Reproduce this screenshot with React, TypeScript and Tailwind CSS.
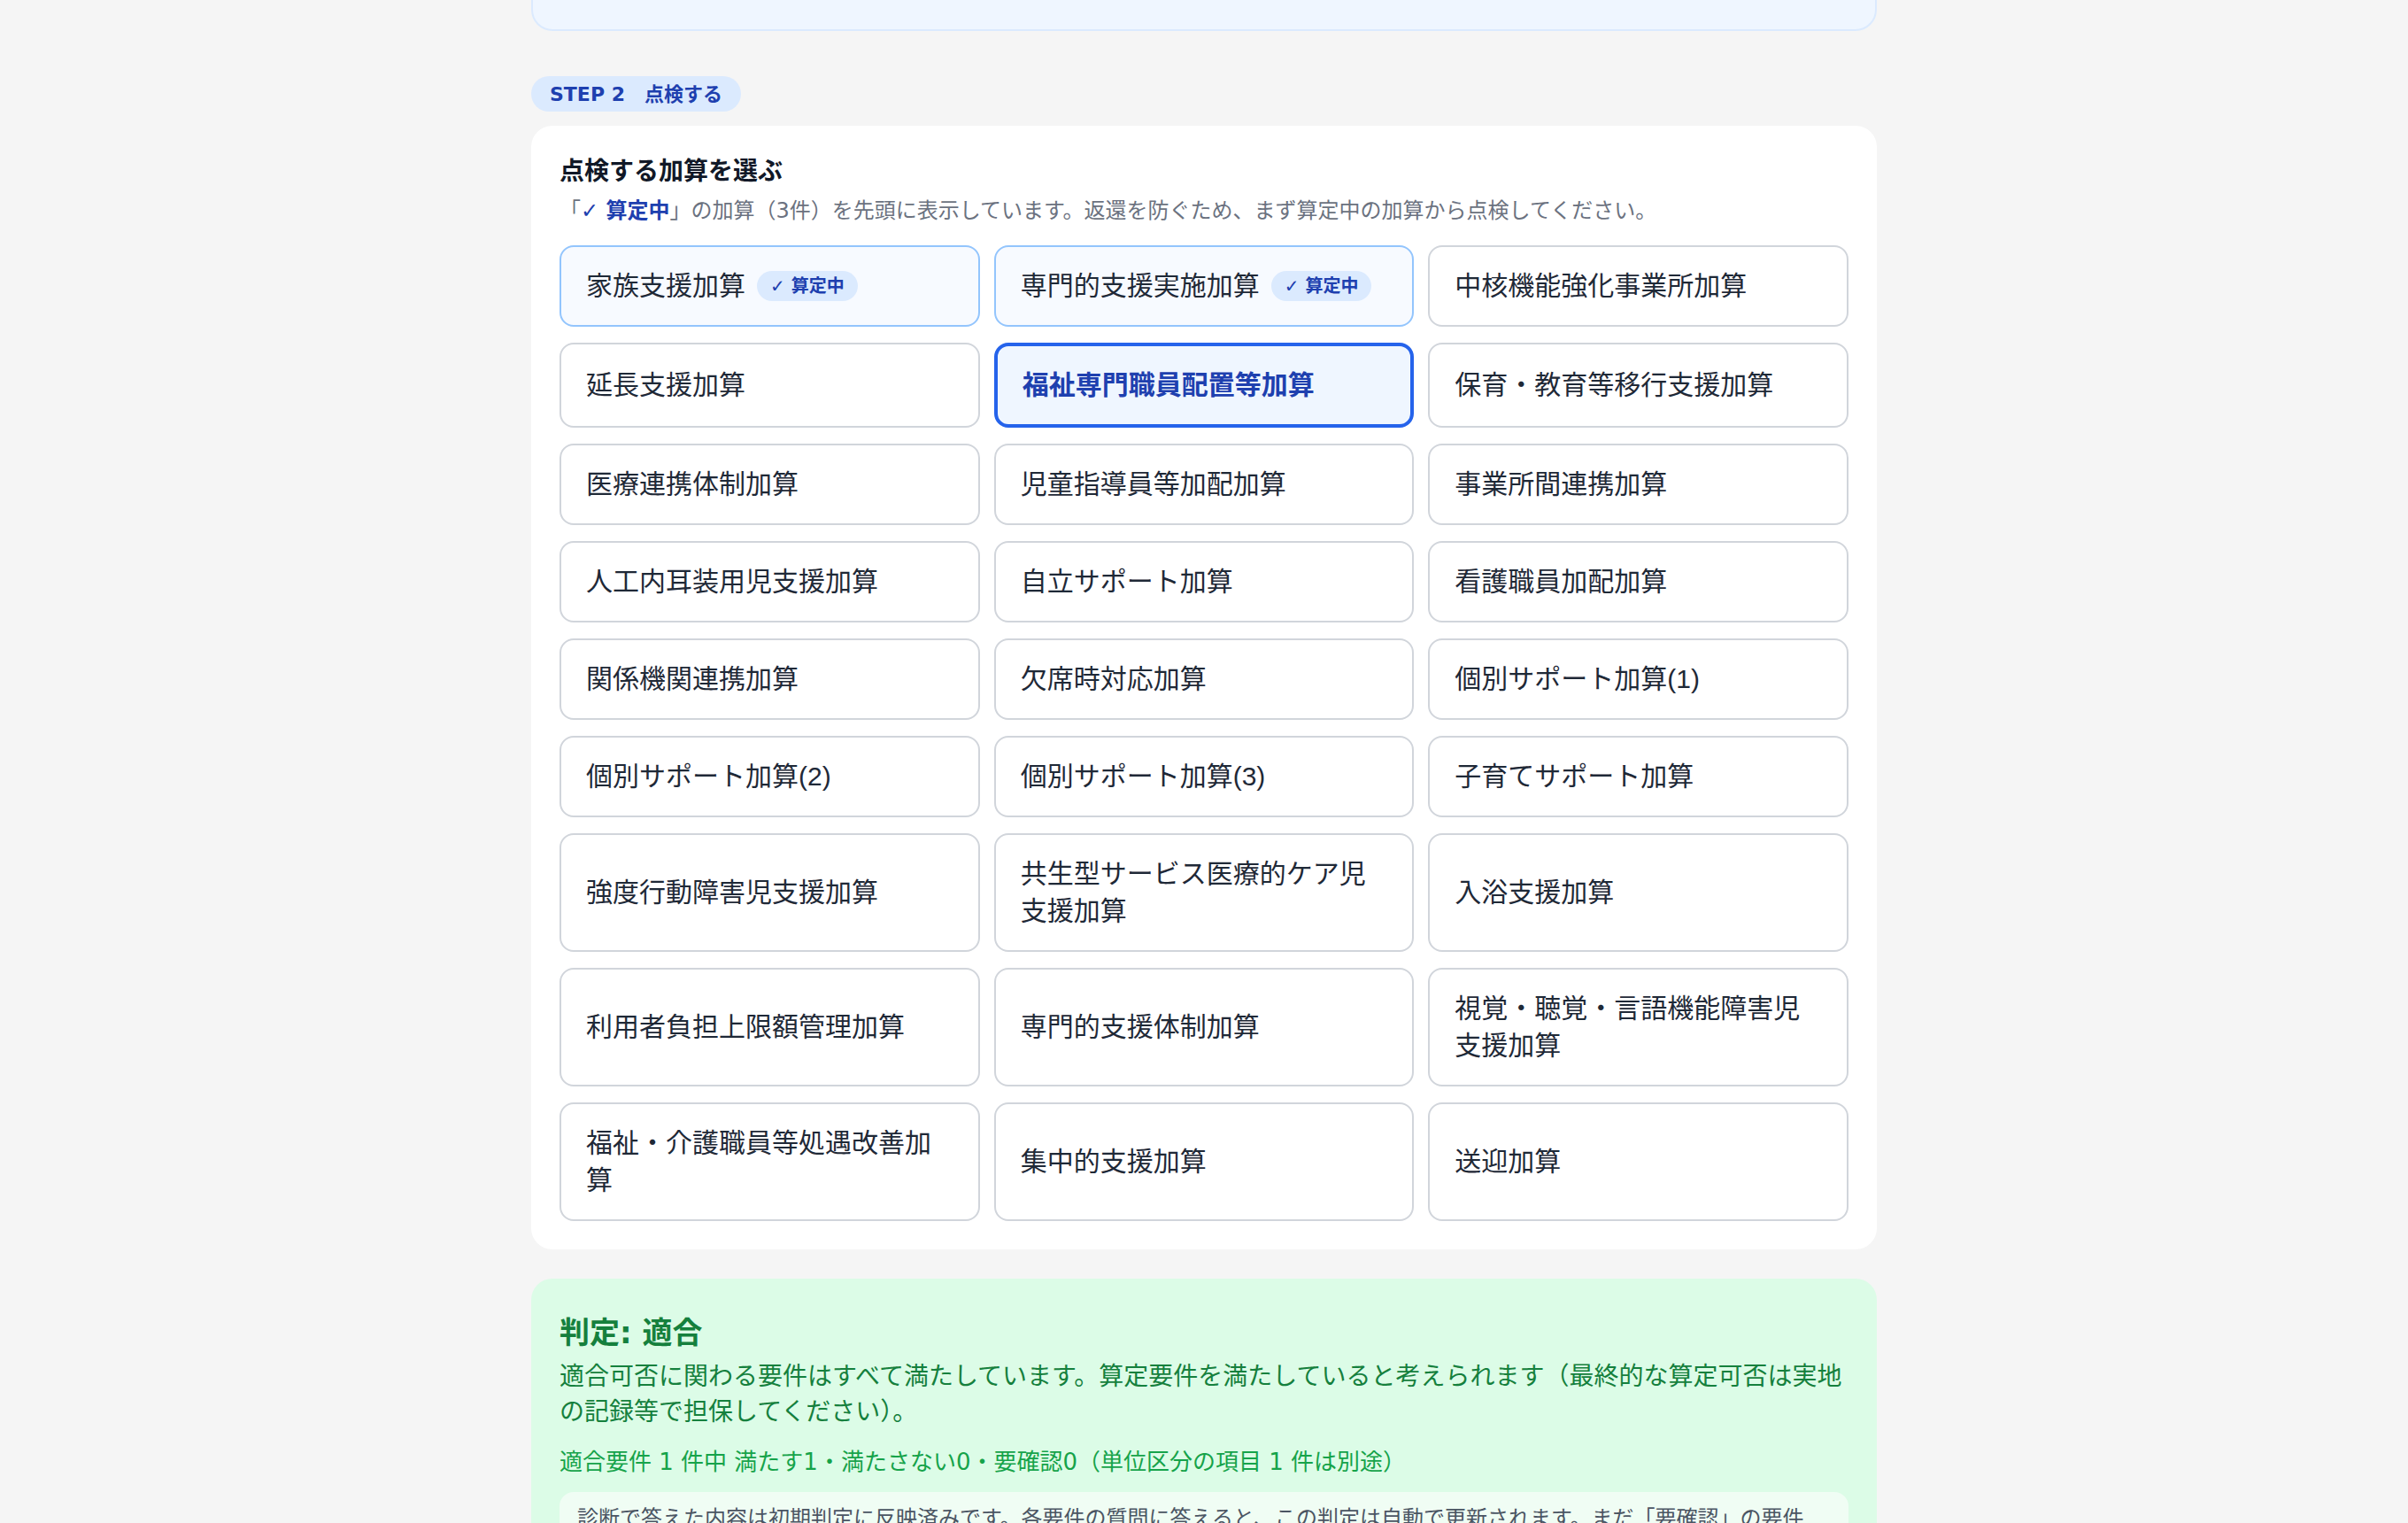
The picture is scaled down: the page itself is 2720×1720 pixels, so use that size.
import React from "react";

type Item = { name: string; active?: boolean; selected?: boolean };

const items: Item[] = [
	{ name: "家族支援加算", active: true },
	{ name: "専門的支援実施加算", active: true },
	{ name: "中核機能強化事業所加算" },
	{ name: "延長支援加算" },
	{ name: "福祉専門職員配置等加算", selected: true },
	{ name: "保育・教育等移行支援加算" },
	{ name: "医療連携体制加算" },
	{ name: "児童指導員等加配加算" },
	{ name: "事業所間連携加算" },
	{ name: "人工内耳装用児支援加算" },
	{ name: "自立サポート加算" },
	{ name: "看護職員加配加算" },
	{ name: "関係機関連携加算" },
	{ name: "欠席時対応加算" },
	{ name: "個別サポート加算(1)" },
	{ name: "個別サポート加算(2)" },
	{ name: "個別サポート加算(3)" },
	{ name: "子育てサポート加算" },
	{ name: "強度行動障害児支援加算" },
	{ name: "共生型サービス医療的ケア児支援加算" },
	{ name: "入浴支援加算" },
	{ name: "利用者負担上限額管理加算" },
	{ name: "専門的支援体制加算" },
	{ name: "視覚・聴覚・言語機能障害児支援加算" },
	{ name: "福祉・介護職員等処遇改善加算" },
	{ name: "集中的支援加算" },
	{ name: "送迎加算" },
];

// 加算カード
const AddonButton = ({ item }: { item: Item }) => {
	let cls = "border-2 border-[#d1d5db] bg-white text-[#1f2937]";
	if (item.selected) {
		cls = "border-4 border-[#2563eb] bg-[#eff6ff] text-[#1e40af] font-bold";
	} else if (item.active) {
		cls = "border-2 border-[#93c5fd] bg-[#f7faff] text-[#1f2937]";
	}
	return (
		<button
			type="button"
			className={`flex items-center gap-[13px] rounded-[16px] px-[28px] py-[23px] text-left text-[30px] leading-[42px] ${cls}`}
		>
			<span className="font-['Liberation_Sans','Noto_Sans_CJK_JP',sans-serif]">{item.name}</span>
			{item.active && (
				<span className="flex h-[34px] shrink-0 items-center rounded-full bg-[#dbeafe] px-[15px] text-[20px] font-bold leading-[26px] text-[#1e40af]">
					✓ 算定中
				</span>
			)}
		</button>
	);
};

export default function App() {
	return (
		<div className="min-h-screen bg-[#f5f5f5] font-['DejaVu_Sans','Noto_Sans_CJK_JP',sans-serif]">
			<div className="mx-auto w-[1520px]">
				{/* 前のステップのカード（下端のみ表示） */}
				<div className="h-[35px] rounded-b-[24px] border-x-2 border-b-2 border-[#dbeafe] bg-[#eff6ff]"></div>

				{/* STEP 2 */}
				<div className="mt-[51px] flex">
					<span className="flex h-[40px] items-center rounded-full bg-[#dbeafe] px-[21px] text-[22px] font-bold text-[#1e40af]">
						STEP 2　点検する
					</span>
				</div>

				<div className="mt-[16px] rounded-[24px] bg-white p-[32px]">
					<h2 className="text-[28px] font-bold leading-[40px] text-[#111827]">点検する加算を選ぶ</h2>
					<p className="mt-[8px] text-[24px] leading-[32px] text-[#6b7280]">
						「<strong className="font-bold text-[#1e40af]">✓ 算定中</strong>
						」の加算（3件）を先頭に表示しています。返還を防ぐため、まず算定中の加算から点検してください。
					</p>
					<div className="mt-[23px] grid grid-cols-3 gap-x-[16px] gap-y-[18px]">
						{items.map((item) => (
							<AddonButton key={item.name} item={item} />
						))}
					</div>
				</div>

				{/* 判定結果 */}
				<div className="mt-[33px] rounded-[24px] bg-[#dcfce7] p-[32px]">
					<h3 className="pt-[3px] text-[34px] font-bold leading-[52px] text-[#15803d]">判定: 適合</h3>
					<p className="mt-[4px] text-[28px] leading-[40px] text-[#15803d]">
						適合可否に関わる要件はすべて満たしています。算定要件を満たしていると考えられます（最終的な算定可否は実地の記録等で担保してください）。
					</p>
					<p className="mt-[20px] text-[26px] leading-[32px] text-[#16a34a]">
						適合要件 1 件中 満たす1・満たさない0・要確認0（単位区分の項目 1 件は別途）
					</p>
					<div className="mt-[18px] rounded-[16px] bg-[#f0fdf4] pb-[12px] pl-[20px] pr-[40px] pt-[12px] text-[24px] leading-[36px] text-[#4b5563]">
						診断で答えた内容は初期判定に反映済みです。各要件の質問に答えると、この判定は自動で更新されます。まだ「要確認」の要件がある場合は、質問に回答して判定を確定してください。
					</div>
				</div>
				<div className="h-[80px]"></div>
			</div>
		</div>
	);
}
